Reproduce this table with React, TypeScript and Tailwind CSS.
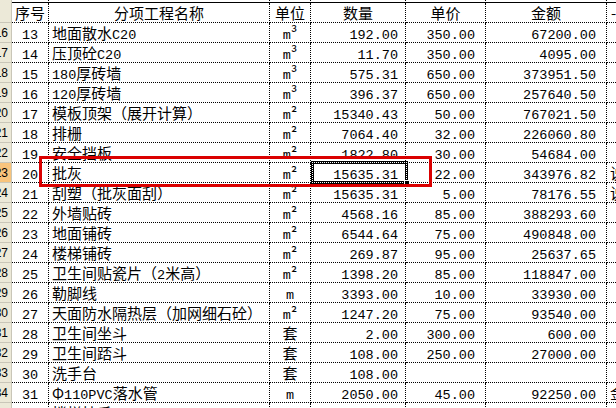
const ROWS = [
  { row: '16', no: '13', name: '地面散水C20', unit: 'm³', qty: '192.00', price: '350.00', amount: '67200.00' },
  { row: '17', no: '14', name: '压顶砼C20', unit: 'm³', qty: '11.70', price: '350.00', amount: '4095.00' },
  { row: '18', no: '15', name: '180厚砖墙', unit: 'm³', qty: '575.31', price: '650.00', amount: '373951.50' },
  { row: '19', no: '16', name: '120厚砖墙', unit: 'm³', qty: '396.37', price: '650.00', amount: '257640.50' },
  { row: '20', no: '17', name: '模板顶架（展开计算）', unit: 'm²', qty: '15340.43', price: '50.00', amount: '767021.50' },
  { row: '21', no: '18', name: '排栅', unit: 'm²', qty: '7064.40', price: '32.00', amount: '226060.80' },
  { row: '22', no: '19', name: '安全挡板', unit: 'm²', qty: '1822.80', price: '30.00', amount: '54684.00' },
  { row: '23', no: '20', name: '批灰', unit: 'm²', qty: '15635.31', price: '22.00', amount: '343976.82', extra: '说', active: true },
  { row: '24', no: '21', name: '刮塑（批灰面刮）', unit: 'm²', qty: '15635.31', price: '5.00', amount: '78176.55', extra: '说' },
  { row: '25', no: '22', name: '外墙贴砖', unit: 'm²', qty: '4568.16', price: '85.00', amount: '388293.60' },
  { row: '26', no: '23', name: '地面铺砖', unit: 'm²', qty: '6544.64', price: '75.00', amount: '490848.00' },
  { row: '27', no: '24', name: '楼梯铺砖', unit: 'm²', qty: '269.87', price: '95.00', amount: '25637.65' },
  { row: '28', no: '25', name: '卫生间贴瓷片（2米高）', unit: 'm²', qty: '1398.20', price: '85.00', amount: '118847.00' },
  { row: '29', no: '26', name: '勒脚线', unit: 'm', qty: '3393.00', price: '10.00', amount: '33930.00' },
  { row: '30', no: '27', name: '天面防水隔热层（加网细石砼）', unit: 'm²', qty: '1247.20', price: '75.00', amount: '93540.00' },
  { row: '31', no: '28', name: '卫生间坐斗', unit: '套', qty: '2.00', price: '300.00', amount: '600.00' },
  { row: '32', no: '29', name: '卫生间踎斗', unit: '套', qty: '108.00', price: '250.00', amount: '27000.00' },
  { row: '33', no: '30', name: '洗手台', unit: '套', qty: '108.00', price: '', amount: '' },
  { row: '34', no: '31', name: 'Φ110PVC落水管', unit: 'm', qty: '2050.00', price: '45.00', amount: '92250.00', extra: '金' },
  { row: '35', no: '32', name: '楼梯扶手', unit: 'm', qty: '', price: '', amount: '' },
];

// ascii runs get the narrow mono face, the rest stays CJK
function Txt({ s }: { s: string }) {
  const parts = s.match(/[\x20-\x7e]+|[^\x20-\x7e]+/g) ?? [];
  return (
    <>
      {parts.map((p, i) =>
        /^[\x20-\x7e]/.test(p) ? (
          <span key={i} className="font-['Liberation_Mono',monospace] text-[13.5px]">{p}</span>
        ) : (
          <span key={i}>{p}</span>
        )
      )}
    </>
  );
}

const cell = 'h-full shrink-0 overflow-hidden whitespace-nowrap border-r border-b border-dotted border-black leading-[19px]';

function RowHead({ n, active }: { n?: string; active?: boolean }) {
  return (
    <div
      className={`flex h-full w-[12px] shrink-0 justify-end overflow-hidden border-r border-b border-[#c9c6b8] pr-[3px] font-['Liberation_Sans',sans-serif] text-[12px] leading-[21px] text-black ${
        active ? 'bg-[#f8c47c]' : 'bg-[#ece9d8]'
      }`}
    >
      {n}
    </div>
  );
}

function Row({ r }: { r: (typeof ROWS)[number] }) {
  return (
    <div className="flex h-5">
      <RowHead n={r.row} active={r.active} />
      <div className={`${cell} w-[37px] text-center`}><Txt s={r.no} /></div>
      <div className={`${cell} w-[221px] pl-[3px]`}><Txt s={r.name} /></div>
      <div className={`${cell} w-[41px] text-center`}><Txt s={r.unit} /></div>
      <div className={`${cell} w-[95px] pr-[7px] text-right`}><Txt s={r.qty} /></div>
      <div className={`${cell} w-[80px] pr-[10px] text-right`}><Txt s={r.price} /></div>
      <div className={`${cell} w-[121px] pr-[10px] text-right`}><Txt s={r.amount} /></div>
      <div className={`${cell} w-[9px] border-r-0 pl-[3px]`}>{r.extra}</div>
    </div>
  );
}

export default function App() {
  return (
    <div className="relative h-[408px] w-[616px] overflow-hidden bg-white font-['Noto_Sans_CJK_SC','Noto_Sans',sans-serif] text-[15px] text-black">
      {/* tail of the row above, cut by the scroll */}
      <div className="flex h-[3px]">
        <div className="h-full w-[12px] shrink-0 border-r border-[#c9c6b8] bg-[#ece9d8]" />
        {[37, 221, 41, 95, 80, 121].map((w) => (
          <div key={w} style={{ width: w }} className="h-full shrink-0 border-r border-b border-dotted border-r-black border-b-black [border-bottom-style:solid]" />
        ))}
        <div className="h-full flex-1 border-b border-black" />
      </div>

      <div className="flex h-5">
        <RowHead />
        <div className={`${cell} w-[37px] text-center`}>序号</div>
        <div className={`${cell} w-[221px] text-center`}>分项工程名称</div>
        <div className={`${cell} w-[41px] text-center`}>单位</div>
        <div className={`${cell} w-[95px] text-center`}>数量</div>
        <div className={`${cell} w-[80px] text-center`}>单价</div>
        <div className={`${cell} w-[121px] text-center`}>金额</div>
        <div className={`${cell} w-[9px] border-r-0 pl-[4px]`}>-</div>
      </div>

      {ROWS.map((r) => (
        <Row key={r.no} r={r} />
      ))}

      {/* active cell frame + fill handle */}
      <div className="absolute left-[311px] top-[161px] h-[23px] w-[97px] border-[3px] border-black">
        <div className="absolute -inset-[2px] border border-dotted border-white" />
      </div>
      <div className="absolute left-[404px] top-[180px] h-[6px] w-[6px] border border-white bg-black" />

      {/* red annotation box */}
      <div className="absolute left-[39px] top-[156px] h-[31px] w-[393px] border-[3px] border-[#da0000]" />
    </div>
  );
}
